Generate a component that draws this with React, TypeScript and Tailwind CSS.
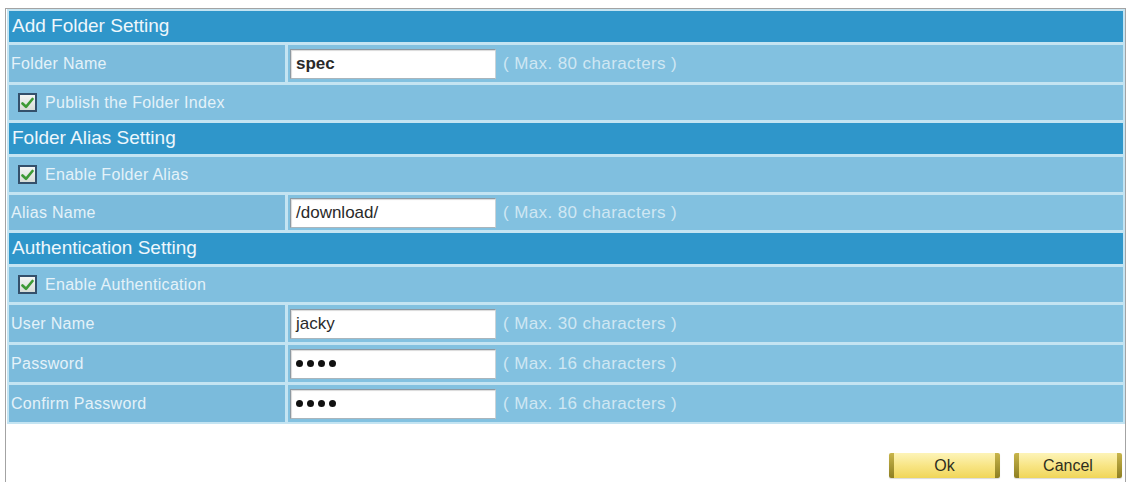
import React from "react";

const Check = () => (
  <div className="w-[19px] h-[19px] border-2 border-[#34506b] bg-gradient-to-b from-[#f4f6f4] to-[#d6dcd6] flex items-center justify-center shrink-0">
    <svg width="13" height="12" viewBox="0 0 13 12">
      <path d="M1.5 6.5 L5 9.8 L11.5 2" stroke="#3c9a34" strokeWidth="2.6" fill="none" strokeLinecap="round" strokeLinejoin="round" />
    </svg>
  </div>
);

const Header = ({ title }: { title: string }) => (
  <div className="h-[31px] bg-[#2f96ca] flex items-center pl-[3px] text-[19px] text-[#eef7fc]">{title}</div>
);

const CheckRow = ({ label, h }: { label: string; h: string }) => (
  <div className={`${h} bg-[#80bfdf] flex items-center pl-[9px] gap-[8px] text-[16px] tracking-[0.3px] text-[#e4f2f9]`}>
    <Check />
    <span>{label}</span>
  </div>
);

const Dots = () => (
  <div className="flex gap-[4px] items-center">
    <span className="w-[7px] h-[7px] rounded-full bg-[#111]" />
    <span className="w-[7px] h-[7px] rounded-full bg-[#111]" />
    <span className="w-[7px] h-[7px] rounded-full bg-[#111]" />
    <span className="w-[7px] h-[7px] rounded-full bg-[#111]" />
  </div>
);

const FieldRow = ({
  label,
  value,
  hint,
  h,
  bold,
  password,
}: {
  label: string;
  value?: string;
  hint: string;
  h: string;
  bold?: boolean;
  password?: boolean;
}) => (
  <div className={`${h} flex gap-[3px]`}>
    <div className="w-[276px] bg-[#7bbbdc] flex items-center pl-[2px] text-[16px] tracking-[0.3px] text-[#e4f2f9]">{label}</div>
    <div className="flex-1 bg-[#82c1e0] flex items-center pl-[2px] gap-[7px]">
      <div className="w-[206px] h-[30px] bg-white border border-t-[#8d99a2] border-l-[#8d99a2] border-r-[#c9d3d8] border-b-[#a9b5bc] shadow-[inset_1px_1px_1px_rgba(0,0,0,0.15)] flex items-center pl-[5px]">
        {password ? (
          <Dots />
        ) : (
          <span className={`text-[17px] text-[#2a2a2a] ${bold ? "font-bold" : ""}`}>{value}</span>
        )}
      </div>
      <span className="text-[17px] tracking-[0.4px] text-[#cfe7f3]">{hint}</span>
    </div>
  </div>
);

const Btn = ({ label, w }: { label: string; w: string }) => (
  <div className={`${w} h-[25px] flex rounded-[2px] overflow-hidden shadow-[0_1px_1px_rgba(0,0,0,0.15)]`}>
    <div className="w-[5px] bg-gradient-to-b from-[#c8b54a] to-[#8e7f22]" />
    <div className="flex-1 bg-gradient-to-b from-[#fdf4b8] via-[#f8e585] to-[#f0d658] flex items-center justify-center text-[16px] text-[#2e2e1e]">
      {label}
    </div>
    <div className="w-[5px] bg-gradient-to-b from-[#c8b54a] to-[#8e7f22]" />
  </div>
);

export default function App() {
  return (
    <div className="w-[1128px] h-[482px] bg-white pt-[8px] pl-[5px] pr-[2px] font-['Liberation_Sans',Arial,sans-serif] overflow-hidden">
      <div className="h-[480px] border-l border-t border-r border-[#a3a3a3] pl-[1px]">
        <div className="bg-[#c4e4f2] flex flex-col gap-[3px] p-[2px]">
          <Header title="Add Folder Setting" />
          <FieldRow label="Folder Name" value="spec" bold hint="( Max. 80 characters )" h="h-[37px]" />
          <CheckRow label="Publish the Folder Index" h="h-[35px]" />
          <Header title="Folder Alias Setting" />
          <CheckRow label="Enable Folder Alias" h="h-[35px]" />
          <FieldRow label="Alias Name" value="/download/" hint="( Max. 80 characters )" h="h-[35px]" />
          <Header title="Authentication Setting" />
          <CheckRow label="Enable Authentication" h="h-[35px]" />
          <FieldRow label="User Name" value="jacky" hint="( Max. 30 characters )" h="h-[37px]" />
          <FieldRow label="Password" password hint="( Max. 16 characters )" h="h-[37px]" />
          <FieldRow label="Confirm Password" password hint="( Max. 16 characters )" h="h-[37px]" />
        </div>
        <div className="flex justify-end gap-[14px] mt-[29px] pr-[3px]">
          <Btn label="Ok" w="w-[111px]" />
          <Btn label="Cancel" w="w-[108px]" />
        </div>
      </div>
    </div>
  );
}
